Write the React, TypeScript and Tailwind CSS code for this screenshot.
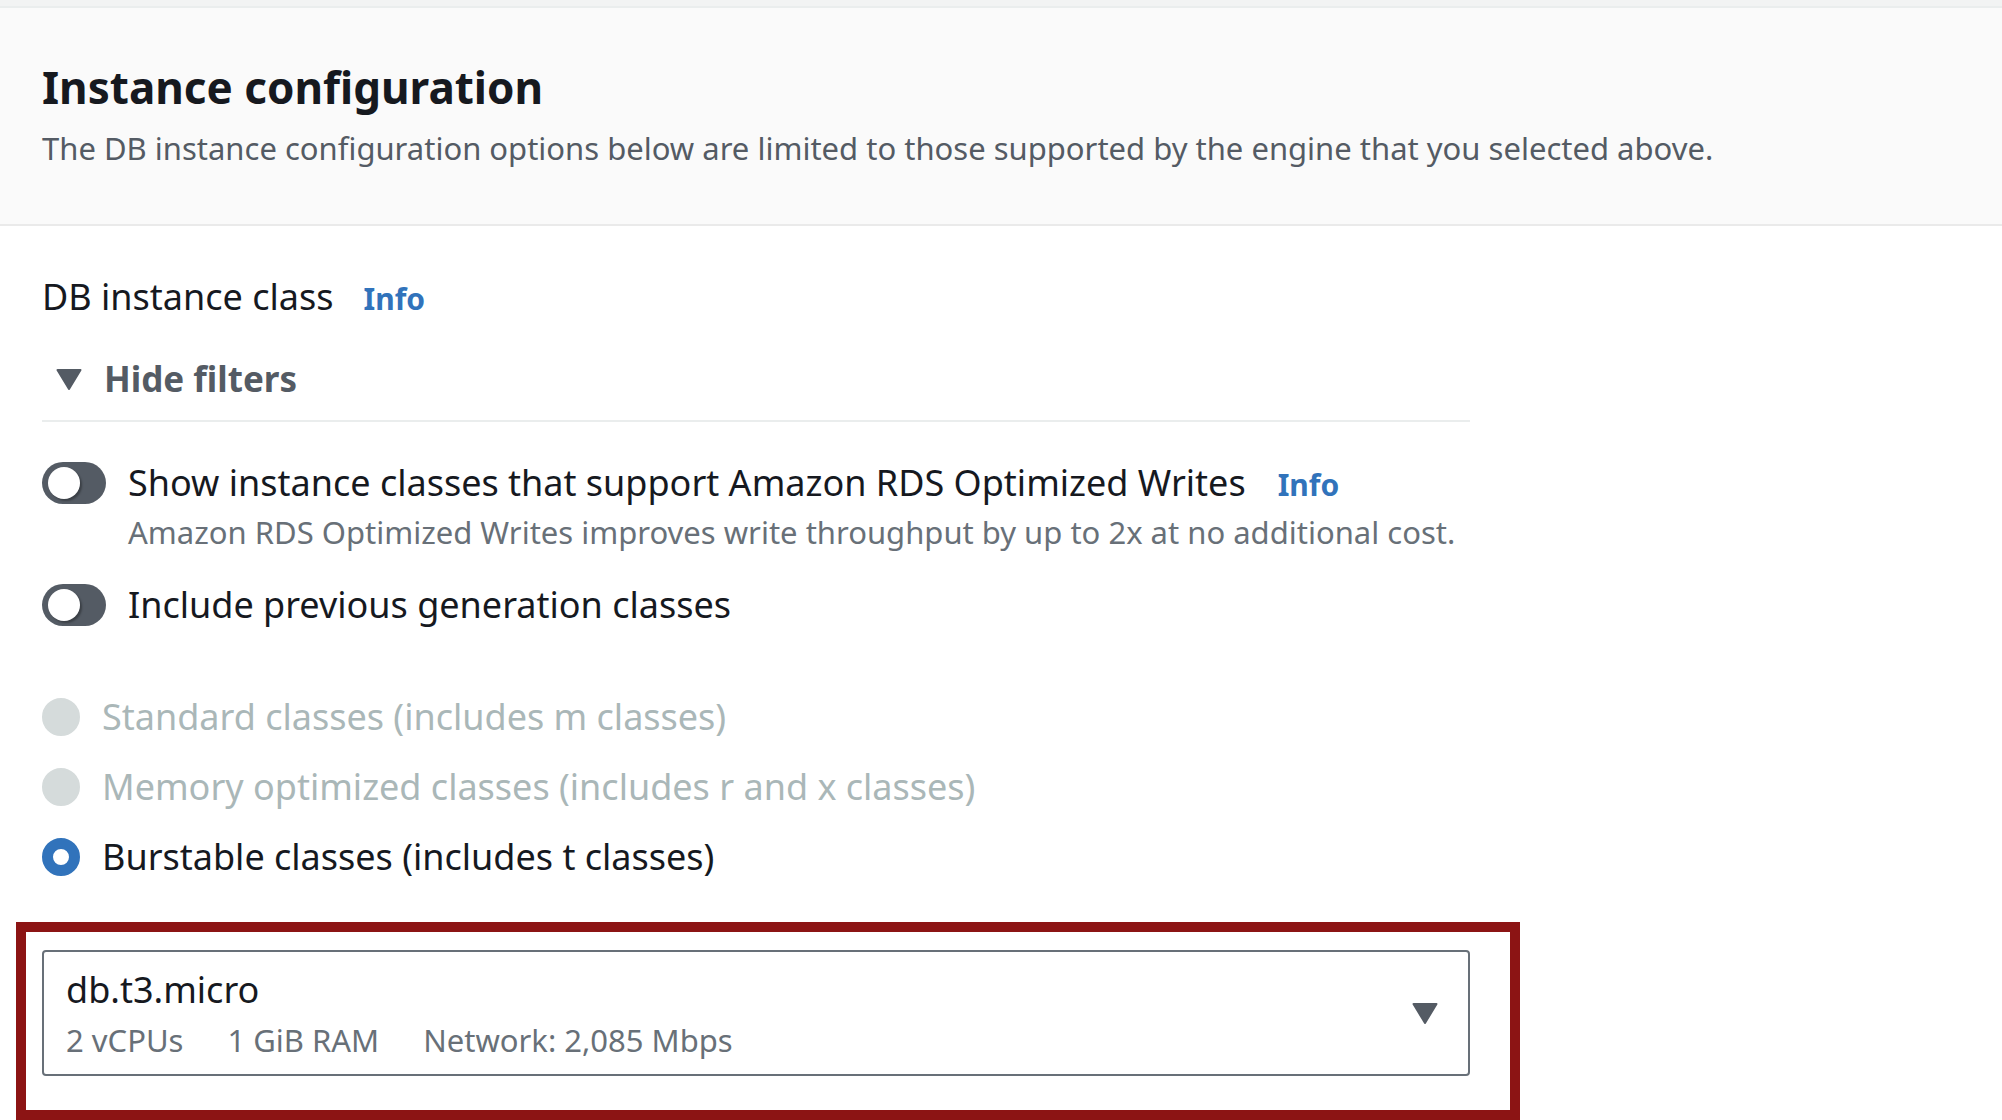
import { useState } from "react";

function Caret({ className = "" }: { className?: string }) {
  return (
    <svg
      className={`h-[22px] w-[26px] fill-[#545b64] stroke-[#545b64] ${className}`}
      viewBox="0 0 26 22"
      strokeWidth="2"
      strokeLinejoin="round"
      aria-hidden="true"
    >
      <path d="M1.5 2H24.5L13 21Z" />
    </svg>
  );
}

function InfoLink() {
  return (
    <a href="#info" className="text-[30px] leading-[40px] font-bold text-[#3173bb]">
      Info
    </a>
  );
}

function Toggle({ id }: { id: string }) {
  const [on, setOn] = useState(false);
  return (
    <input
      id={id}
      type="checkbox"
      role="switch"
      checked={on}
      onChange={() => setOn(!on)}
      className="mt-[7px] flex h-[42px] w-16 shrink-0 cursor-pointer appearance-none items-center rounded-full bg-[#545b64] px-[6px] before:size-8 before:rounded-full before:bg-white before:shadow-[2px_2px_2px_rgba(0,0,0,0.3)] before:content-[''] checked:justify-end checked:bg-[#3173bb]"
    />
  );
}

const classes = [
  { id: "standard", label: "Standard classes (includes m classes)", disabled: true },
  { id: "memory", label: "Memory optimized classes (includes r and x classes)", disabled: true },
  { id: "burstable", label: "Burstable classes (includes t classes)", disabled: false },
];

export default function App() {
  const [family, setFamily] = useState("burstable");
  const [open, setOpen] = useState(true);

  return (
    <main className="min-h-screen bg-white font-['Noto_Sans',sans-serif] text-[36px] leading-[56px] text-[#16191f]">
      <div className="h-2 border-b-2 border-[#eaeded] bg-[#f2f3f3]" />
      <header className="border-b-2 border-[#eaeaea] bg-[#fafafa] px-[42px] pt-12 pb-[46px]">
        <h1 className="text-[44px] leading-[62px] font-bold">Instance configuration</h1>
        <p className="text-[31px] leading-[60px] text-[#545b64]">
          The DB instance configuration options below are limited to those supported by the engine that you selected
          above.
        </p>
      </header>

      <section className="max-w-[1512px] px-[42px] pt-[43px]">
        <div className="flex items-baseline gap-[30px]">
          <h2>DB instance class</h2>
          <InfoLink />
        </div>
        <button
          type="button"
          aria-expanded={open}
          onClick={() => setOpen(!open)}
          className="mt-[26px] flex w-full cursor-pointer items-center gap-[22px] border-b-2 border-[#eaeded] pb-[13px] pl-[14px] text-[35px] leading-[56px] font-bold text-[#545b64]"
        >
          <Caret />
          Hide filters
        </button>

        <div className="mt-[33px] flex gap-[22px]">
          <Toggle id="optimized-writes" />
          <div>
            <div className="flex items-baseline gap-8">
              <label htmlFor="optimized-writes">Show instance classes that support Amazon RDS Optimized Writes</label>
              <InfoLink />
            </div>
            <p className="text-[31px] leading-[42px] text-[#687078]">
              Amazon RDS Optimized Writes improves write throughput by up to 2x at no additional cost.
            </p>
          </div>
        </div>
        <div className="mt-6 flex gap-[22px]">
          <Toggle id="previous-generation" />
          <label htmlFor="previous-generation">Include previous generation classes</label>
        </div>

        <fieldset aria-label="Instance class family" className="mt-14 flex flex-col gap-[14px]">
          {classes.map((c) => (
            <div key={c.id} className="flex items-center gap-[22px]">
              <input
                id={c.id}
                type="radio"
                name="family"
                checked={family === c.id}
                disabled={c.disabled}
                onChange={() => setFamily(c.id)}
                className="size-[38px] shrink-0 appearance-none rounded-full border-2 border-[#687078] bg-white checked:border-[11px] checked:border-[#3173bb] disabled:border-[#d5dbdb] disabled:bg-[#d5dbdb]"
              />
              <label htmlFor={c.id} className={c.disabled ? "text-[#aab7b8]" : ""}>
                {c.label}
              </label>
            </div>
          ))}
        </fieldset>
      </section>

      <div className="mt-[37px] ml-4 max-w-[1504px] border-10 border-[#8c1414] pt-[18px] pr-10 pb-[34px] pl-4">
        <div className="grid">
          <select
            aria-label="DB instance class"
            className="col-start-1 row-start-1 h-[126px] cursor-pointer appearance-none rounded-[4px] border-2 border-[#687078] bg-white pt-[10px] pr-20 pb-14 pl-[22px]"
          >
            <option>db.t3.micro</option>
          </select>
          <div className="pointer-events-none col-start-1 row-start-1 flex items-end gap-11 pb-[14px] pl-6 text-[31px] leading-[44px] text-[#687078]">
            <span>2 vCPUs</span>
            <span>1 GiB RAM</span>
            <span>Network: 2,085 Mbps</span>
          </div>
          <Caret className="pointer-events-none col-start-1 row-start-1 mr-8 self-center justify-self-end" />
        </div>
      </div>
    </main>
  );
}
